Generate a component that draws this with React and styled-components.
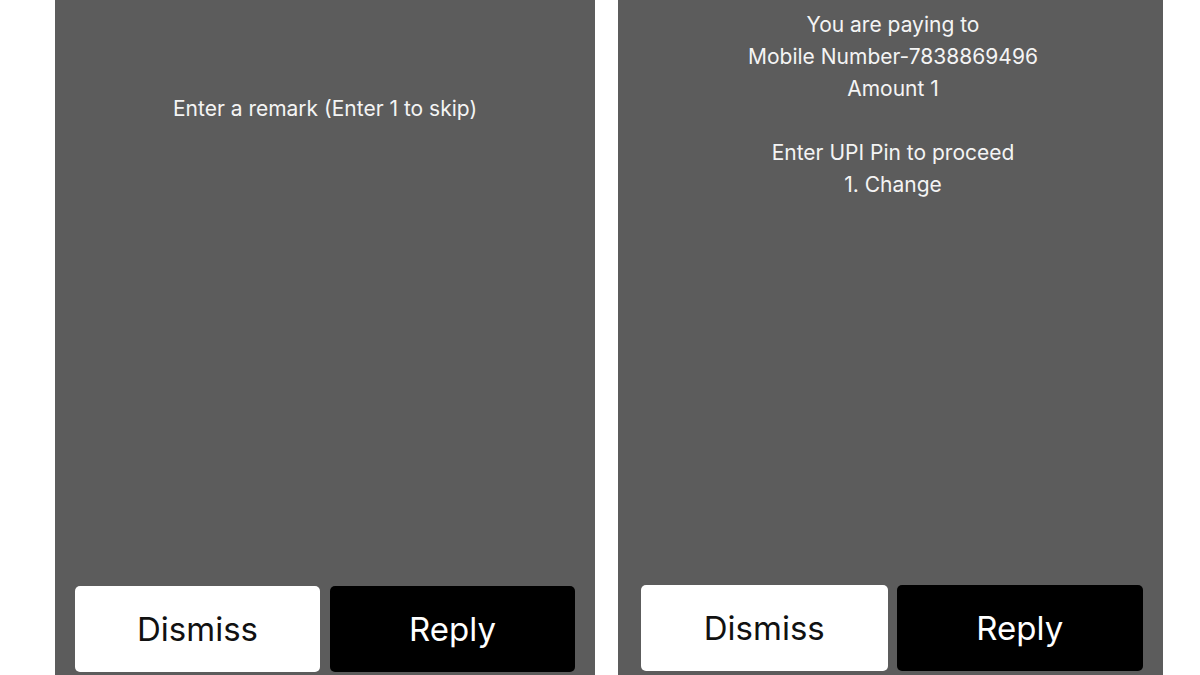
import React from "react";
import styled, { createGlobalStyle } from "styled-components";

const Global = createGlobalStyle`
  html, body { margin: 0; padding: 0; background: #ffffff; }
  body { font-family: Inter, "Liberation Sans", sans-serif; overflow: hidden; }
`;

const Stage = styled.div`
  display: flex;
  gap: 23px;
  height: 675px;
  padding-left: 55px;
  box-sizing: border-box;
`;

const Panel = styled.section`
  width: ${(p) => p.$width}px;
  height: 675px;
  background: #5c5c5c;
  display: flex;
  flex-direction: column;
  justify-content: space-between;
  box-sizing: border-box;
  padding: ${(p) => p.$top}px ${(p) => p.$right}px ${(p) => p.$bottom}px ${(p) => p.$left}px;
`;

const Message = styled.div`
  color: #f4f4f4;
  font-size: 21px;
  line-height: 32px;
  text-align: center;
  white-space: pre-line;
  padding-left: ${(p) => p.$shift || 0}px;
`;

const Actions = styled.div`
  display: grid;
  grid-template-columns: 1fr 1fr;
  gap: ${(p) => p.$gap}px;
`;

const ActionButton = styled.button`
  height: 86px;
  border: none;
  border-radius: 5px;
  font-family: Inter, "Liberation Sans", sans-serif;
  font-size: 33px;
  font-weight: 400;
  padding: 0;
  background: ${(p) => (p.$primary ? "#000000" : "#ffffff")};
  color: ${(p) => (p.$primary ? "#ffffff" : "#111111")};
`;

export default function App() {
  return (
    <>
      <Global />
      <Stage>
        <Panel $width={540} $top={93} $right={20} $bottom={3} $left={20}>
          <Message>Enter a remark (Enter 1 to skip)</Message>
          <Actions $gap={10}>
            <ActionButton>Dismiss</ActionButton>
            <ActionButton $primary>Reply</ActionButton>
          </Actions>
        </Panel>
        <Panel $width={545} $top={9} $right={20} $bottom={4} $left={23}>
          <Message $shift={2}>
            {"You are paying to\nMobile Number-7838869496\nAmount 1\n\u00a0\nEnter UPI Pin to proceed\n1. Change"}
          </Message>
          <Actions $gap={9}>
            <ActionButton>Dismiss</ActionButton>
            <ActionButton $primary>Reply</ActionButton>
          </Actions>
        </Panel>
      </Stage>
    </>
  );
}
